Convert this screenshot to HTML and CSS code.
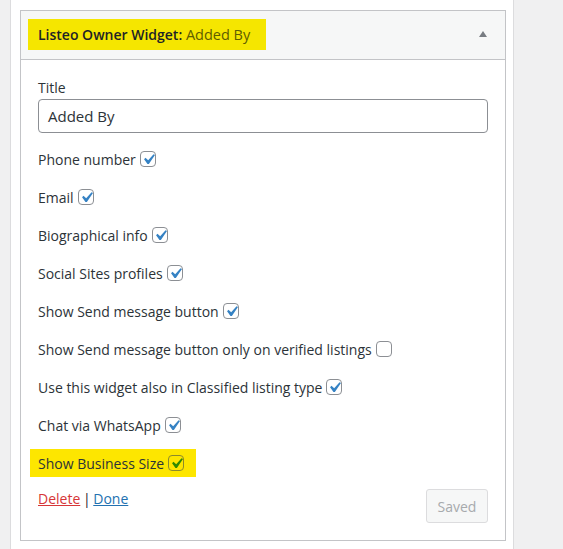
FILE: index.html
```html
<!DOCTYPE html>
<html>
<head>
<meta charset="utf-8">
<link rel="stylesheet" href="styles.css">
</head>
<body>
<div class="panel">
  <div class="widget">
    <div class="widget-top">
      <div class="title-hl"><h3 class="wtitle">Listeo Owner Widget<span class="colon">:</span> <span class="sub">Added By</span></h3></div>
      <span class="arrow"></span>
    </div>
    <div class="widget-inside">
      <label class="lbl">Title</label>
      <div class="input">Added By</div>
      <div class="rows">
        <div class="row"><span>Phone number</span><span class="cb"><svg viewBox="0 0 20 20"><path d="M14.83 4.89l1.34.94-5.81 8.38H9.020L5.78 9.67l1.34-1.25 2.57 2.4z"/></svg></span></div>
        <div class="row"><span>Email</span><span class="cb"><svg viewBox="0 0 20 20"><path d="M14.83 4.89l1.34.94-5.81 8.38H9.02L5.78 9.67l1.34-1.25 2.57 2.4z"/></svg></span></div>
        <div class="row"><span>Biographical info</span><span class="cb"><svg viewBox="0 0 20 20"><path d="M14.83 4.89l1.34.94-5.81 8.38H9.02L5.78 9.67l1.34-1.25 2.57 2.4z"/></svg></span></div>
        <div class="row"><span>Social Sites profiles</span><span class="cb"><svg viewBox="0 0 20 20"><path d="M14.83 4.89l1.34.94-5.81 8.38H9.02L5.78 9.67l1.34-1.25 2.57 2.4z"/></svg></span></div>
        <div class="row"><span>Show Send message button</span><span class="cb"><svg viewBox="0 0 20 20"><path d="M14.83 4.89l1.34.94-5.81 8.38H9.02L5.78 9.67l1.34-1.25 2.57 2.4z"/></svg></span></div>
        <div class="row"><span>Show Send message button only on verified listings</span><span class="cb"></span></div>
        <div class="row"><span>Use this widget also in Classified listing type</span><span class="cb"><svg viewBox="0 0 20 20"><path d="M14.83 4.89l1.34.94-5.81 8.38H9.02L5.78 9.67l1.34-1.25 2.57 2.4z"/></svg></span></div>
        <div class="row"><span>Chat via WhatsApp</span><span class="cb"><svg viewBox="0 0 20 20"><path d="M14.83 4.89l1.34.94-5.81 8.38H9.02L5.78 9.67l1.34-1.25 2.57 2.4z"/></svg></span></div>
        <div class="row"><div class="row-hl"><span>Show Business Size</span><span class="cb cb-hl"><svg viewBox="0 0 20 20"><path d="M14.83 4.89l1.34.94-5.81 8.38H9.02L5.78 9.67l1.34-1.25 2.57 2.4z"/></svg></span></div></div>
      </div>
      <div class="footer">
        <div class="links"><a class="del" href="#">Delete</a> <span class="sep">|</span> <a class="done" href="#">Done</a></div>
        <button class="saved">Saved</button>
      </div>
    </div>
  </div>
</div>
</body>
</html>
```
FILE: styles.css
```css
html, body {
  margin: 0;
  padding: 0;
}
body {
  background: #f0f0f1;
  font-family: "Open Sans", "Noto Sans", sans-serif;
  font-size: 14px;
  color: #1d2327;
}
.panel {
  margin-left: 10px;
  width: 504px;
  min-height: 549px;
  box-sizing: border-box;
  background: #fff;
  border-left: 1px solid #dcdcde;
  border-right: 1px solid #dcdcde;
  padding: 10px 9px 0 9px;
}
.widget {
  border: 1px solid #c3c4c7;
  background: #fff;
  width: 486px;
  box-sizing: border-box;
}
.widget-top {
  height: 48px;
  background: #f6f7f7;
  border-bottom: 1px solid #c3c4c7;
  display: flex;
  align-items: center;
  padding-left: 7px;
}
.title-hl {
  background: #f5e600;
  height: 31px;
  width: 238px;
  box-sizing: border-box;
  padding-left: 10px;
  display: flex;
  align-items: center;
  margin-top: -1px;
}
.wtitle {
  margin: 0;
  font-size: 14px;
  font-weight: 600;
  color: #1d2327;
  white-space: nowrap;
}
.wtitle .sub {
  font-weight: 400;
  color: #5e5d00;
  font-size: 14.5px;
}
.arrow {
  margin-left: auto;
  margin-right: 18px;
  width: 0;
  height: 0;
  border-left: 4.5px solid transparent;
  border-right: 4.5px solid transparent;
  border-bottom: 6px solid #787c82;
  margin-top: -2px;
}
.widget-inside {
  padding: 18px 17px 17px 17px;
}
.lbl {
  display: block;
  line-height: 20px;
  color: #2c3338;
}
.input {
  margin-top: 1px;
  height: 34px;
  box-sizing: border-box;
  border: 1px solid #8c8f94;
  border-radius: 4px;
  padding: 0 9px;
  font-size: 15px;
  line-height: 32px;
  color: #2c3338;
}
.rows {
  display: flex;
  flex-direction: column;
  gap: 18px;
  margin-top: 16px;
}
.row {
  display: flex;
  align-items: center;
  height: 20px;
  white-space: nowrap;
  color: #2c3338;
}
.row-hl {
  display: flex;
  align-items: center;
  background: #fde600;
  height: 28px;
  margin-left: -8px;
  padding: 0 12px 0 8px;
}
.cb {
  display: inline-block;
  width: 16px;
  height: 16px;
  box-sizing: border-box;
  border: 1px solid #8c8f94;
  border-radius: 4px;
  background: #fff;
  margin-left: 4px;
  position: relative;
  flex: none;
}
.cb svg {
  position: absolute;
  left: -3px;
  top: -3px;
  width: 21px;
  height: 21px;
  fill: #3582c4;
}
.cb-hl {
  background: transparent;
  border-color: #8c8a2c;
}
.cb-hl svg {
  fill: #2f8a00;
}
.footer {
  display: flex;
  justify-content: space-between;
  align-items: flex-start;
  margin-top: 16px;
}
.links {
  line-height: 20px;
  padding-top: 0;
  word-spacing: -1px;
}
.del {
  color: #d63638;
}
.done {
  color: #2271b1;
}
.sep {
  color: #1d2327;
}
.saved {
  height: 34px;
  width: 62px;
  background: #f6f7f7;
  border: 1px solid #dcdcde;
  border-radius: 3px;
  color: #a7aaad;
  font-family: "Open Sans", "Noto Sans", sans-serif;
  font-size: 14px;
  padding: 0;
}
```
